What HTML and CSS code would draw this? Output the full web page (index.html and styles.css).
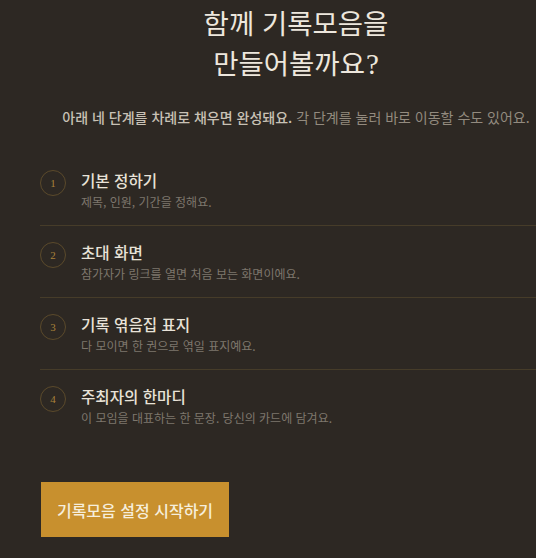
FILE: index.html
```html
<!DOCTYPE html>
<html lang="ko">
<head>
<meta charset="utf-8">
<link rel="stylesheet" href="styles.css">
</head>
<body>
<main class="wrap">
  <h1 class="title">함께 기록모음을<br>만들어볼까요<span class="q">?</span></h1>
  <p class="lead"><strong>아래 네 단계를 차례로 채우면 완성돼요.</strong> 각 단계를 눌러 바로 이동할 수도 있어요.</p>
  <ol class="steps">
    <li class="step">
      <span class="num">1</span>
      <div class="body">
        <div class="name">기본 정하기</div>
        <div class="desc">제목, 인원, 기간을 정해요.</div>
      </div>
    </li>
    <li class="step">
      <span class="num">2</span>
      <div class="body">
        <div class="name">초대 화면</div>
        <div class="desc">참가자가 링크를 열면 처음 보는 화면이에요.</div>
      </div>
    </li>
    <li class="step">
      <span class="num">3</span>
      <div class="body">
        <div class="name">기록 엮음집 표지</div>
        <div class="desc">다 모이면 한 권으로 엮일 표지예요.</div>
      </div>
    </li>
    <li class="step">
      <span class="num">4</span>
      <div class="body">
        <div class="name">주최자의 한마디</div>
        <div class="desc">이 모임을 대표하는 한 문장. 당신의 카드에 담겨요.</div>
      </div>
    </li>
  </ol>
  <button class="start">기록모음 설정 시작하기</button>
</main>
</body>
</html>
```
FILE: styles.css
```css
html, body {
  margin: 0;
  padding: 0;
  background: #2d2823;
  overflow: hidden;
}
body {
  width: 536px;
  height: 558px;
  font-family: "Noto Sans CJK KR", "Noto Sans", sans-serif;
}
.wrap {
  width: 512px;
  margin-left: 40px;
  padding-top: 2px;
}
.title {
  margin: 0;
  text-align: center;
  font-weight: 400;
  font-size: 27.5px;
  line-height: 40px;
  color: #ede7dd;
}
.q {
  font-family: "Liberation Serif", serif;
  font-size: 29px;
  margin-left: 1px;
}
.lead {
  margin: 23px 0 0;
  text-align: center;
  font-size: 14px;
  line-height: 20px;
  color: #938b7f;
  white-space: nowrap;
}
.lead strong {
  font-weight: 500;
  color: #c8c1b5;
}
.steps {
  list-style: none;
  margin: 27px 0 0;
  padding: 0;
}
.step {
  display: flex;
  align-items: flex-start;
  gap: 15px;
  padding: 16px 0 14px;
  border-bottom: 1px solid #463c29;
}
.step:last-child {
  border-bottom: none;
}
.num {
  flex: none;
  width: 24px;
  height: 24px;
  border: 1px solid #5b4a2b;
  border-radius: 50%;
  display: flex;
  align-items: center;
  justify-content: center;
  font-family: "Liberation Serif", serif;
  font-size: 11px;
  color: #a9823a;
}
.name {
  font-size: 15.6px;
  line-height: 20px;
  font-weight: 500;
  color: #e8e2d8;
}
.desc {
  margin-top: 3px;
  font-size: 12px;
  line-height: 18px;
  color: #7e776d;
}
.start {
  margin-top: 41px;
  margin-left: 1px;
  display: flex;
  align-items: center;
  justify-content: center;
  border: none;
  background: #c8902e;
  color: #f6eedc;
  font-family: "Noto Sans CJK KR", "Noto Sans", sans-serif;
  font-size: 16px;
  font-weight: 500;
  white-space: nowrap;
  padding: 0;
  width: 188px;
  height: 55px;
}
```
